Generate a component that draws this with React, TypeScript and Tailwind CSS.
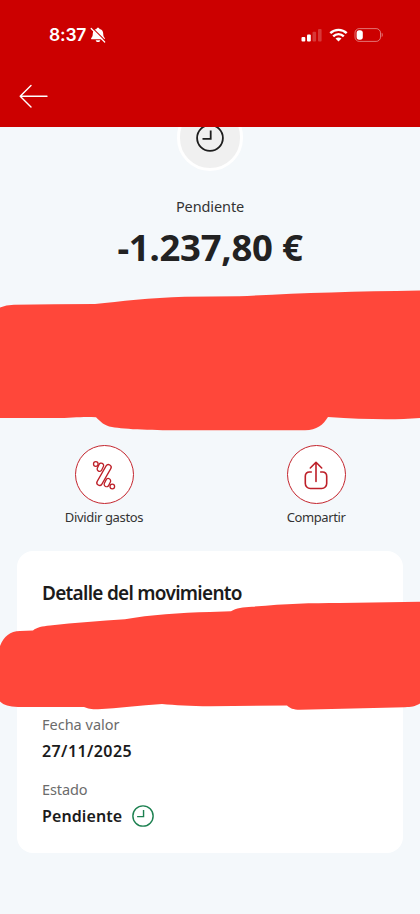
import { ReactNode } from "react";

interface ActionProps {
  label: string;
  labelClass: string;
  children: ReactNode;
}

interface FieldProps {
  label: string;
  labelClass: string;
  children: ReactNode;
}

function StatusBar() {
  return (
    <div className="flex h-[69px] items-center justify-between pl-[49px] pr-[36px]">
      <div className="flex items-center gap-1 text-white">
        <span className="font-['Inter',sans-serif] text-[17.5px] font-semibold leading-5 tracking-[-0.2px]">8:37</span>
        <svg width="16" height="16" viewBox="0 0 16 16">
          <path d="M8 .8c-.9 0-1.400.5-1.500 1.200C4.100 2.500 2.800 4.300 2.800 6.500c0 2.700-.8 3.600-1.500 4.500-.5.700-.1 1.300.6 1.300h12.200c.7 0 1.100-.6.600-1.300-.7-.9-1.500-1.800-1.500-4.500 0-2.200-1.300-4-3.700-4.500C9.400 1.300 8.900.8 8 .8z" fill="currentColor" />
          <path d="M5.700 13.200h4.600c-.2 1.200-1.200 1.900-2.300 1.900s-2.100-.7-2.300-1.900z" fill="currentColor" />
          <path d="M2.300 .8 15.200 13.700" stroke="#cc0000" strokeWidth="1.200" />
          <path d="M1.200 1.500 14.700 15" stroke="currentColor" strokeWidth="1.200" strokeLinecap="round" />
        </svg>
      </div>
      <div className="flex items-center text-white">
        <svg width="21" height="14" viewBox="0 0 21 14" fill="currentColor">
          <rect x="0.500" y="9" width="3.800" height="4.500" rx="1" />
          <rect x="6" y="6.500" width="3.800" height="7" rx="1" />
          <rect x="11.500" y="3.800" width="3.600" height="9.700" rx="1" opacity="0.220" />
          <rect x="17" y="1" width="3.600" height="12.500" rx="1" opacity="0.220" />
        </svg>
        <svg className="ml-[7px]" width="19" height="14" viewBox="0 0 19 14" fill="none" stroke="currentColor" strokeWidth="2.400">
          <path d="M1.300 5.200C5.900.700 13.100.700 17.700 5.200" />
          <path d="M4.200 8.300c3-2.900 7.600-2.900 10.600 0" />
          <path d="M9.500 13.600 6.500 10.600c1.700-1.500 4.300-1.500 6 0z" fill="currentColor" stroke="none" />
        </svg>
        <svg className="ml-[6px]" width="30" height="14" viewBox="0 0 30 14">
          <rect x="1" y="0.600" width="25.500" height="12.800" rx="4.300" fill="none" stroke="white" strokeOpacity="0.450" />
          <rect x="2.600" y="2.300" width="6.200" height="9.400" rx="2.600" fill="white" />
          <path d="M27.700 4.800c1.300.5 1.300 3.900 0 4.400z" fill="white" fillOpacity="0.500" />
        </svg>
      </div>
    </div>
  );
}

function ClockIcon({ className }: { className: string }) {
  return (
    <svg className={className} viewBox="0 0 28 28" fill="none" stroke="currentColor" strokeWidth="1.800">
      <circle cx="14" cy="14" r="12.900" />
      <path d="M14.700 6.500v8.300H6.500" />
    </svg>
  );
}

function Action({ label, labelClass, children }: ActionProps) {
  return (
    <div className="flex w-[120px] flex-col items-center">
      <div className="flex h-[59px] w-[59px] items-center justify-center rounded-full border-[1.5px] border-[#c4262e] bg-white text-[#bd1f28]">
        {children}
      </div>
      <span className={"mt-[3px] whitespace-nowrap text-[13px] leading-5 text-[#333] " + labelClass}>{label}</span>
    </div>
  );
}

function Field({ label, labelClass, children }: FieldProps) {
  return (
    <div className="flex flex-col">
      <div className={"text-[14.5px] leading-5 text-[#6b6b6b] " + labelClass}>{label}</div>
      <div className="mt-[7px] flex h-5 items-center text-[16px] font-semibold leading-5 text-[#1b1b1b]">{children}</div>
    </div>
  );
}

export default function App() {
  return (
    <div className="relative flex h-[914px] w-[420px] flex-col overflow-hidden bg-[#f4f8fb] font-['Noto_Sans',sans-serif]">
      <header className="h-[127px] shrink-0 bg-[#cc0000]">
        <StatusBar />
        <div className="flex pl-[19px] pt-[15px]">
          <svg width="30" height="24" viewBox="0 0 30 24" fill="none" stroke="white" strokeWidth="1.400" strokeLinecap="round" strokeLinejoin="round">
            <path d="M28 12.300H1.200M12 1.500 1.200 12.300 12 23" />
          </svg>
        </div>
      </header>

      <main className="flex flex-1 flex-col overflow-hidden">
        <section className="flex flex-col items-center">
          <div className="-mt-[23px] flex h-[67px] w-[66px] shrink-0 items-center justify-center rounded-full border-[3px] border-white bg-[#f0f0f0] text-[#1d1d1d]">
            <ClockIcon className="h-7 w-7" />
          </div>
          <div className="mt-[25px] text-[14.5px] leading-5 tracking-[-0.1px] text-[#333]">Pendiente</div>
          <div className="mt-[6px] whitespace-nowrap text-[36.5px] font-bold leading-[50px] tracking-[-0.25px] text-[#222]">-1.237,80 €</div>
        </section>

        <section className="mt-[173px] flex justify-between px-[44px]">
          <Action label="Dividir gastos" labelClass="tracking-[-0.35px]">
            <svg width="30" height="30" viewBox="-15 -15 30 30" fill="none" stroke="currentColor" strokeWidth="1.300">
              <circle cx="-8.200" cy="-11" r="2.300" />
              <rect x="-2.400" y="-4.300" width="4.800" height="8.600" rx="2.400" transform="translate(-3.600 -7.800) rotate(26)" />
              <rect x="-2.700" y="-11.600" width="5.400" height="23.200" rx="2.700" transform="rotate(30)" />
              <rect x="-2.400" y="-4.300" width="4.800" height="8.600" rx="2.400" transform="translate(3.400 7.600) rotate(26)" />
              <circle cx="8.300" cy="11.500" r="2.300" />
            </svg>
          </Action>
          <Action label="Compartir" labelClass="tracking-[-0.4px]">
            <svg width="28" height="30" viewBox="0 0 28 30" fill="none" stroke="currentColor" strokeWidth="1.600" strokeLinecap="round" strokeLinejoin="round">
              <path d="M14 21.500V2.500M8.300 8 14 2.300 19.700 8" />
              <path d="M9.300 12H7.500a4 4 0 0 0-4.200 4.200v7.300a5 5 0 0 0 5 5h11.400a5 5 0 0 0 5-5v-7.300A4 4 0 0 0 20.500 12h-1.800" />
            </svg>
          </Action>
        </section>

        <section className="ml-[17px] mr-[17px] mt-[24px] h-[302px] shrink-0 rounded-2xl bg-white px-[25px] pt-[29px]">
          <h2 className="whitespace-nowrap text-[19px] font-semibold leading-[26px] tracking-[-0.72px] text-[#1b1b1b]">Detalle del movimiento</h2>
          <div className="mt-[108px] flex flex-col gap-[18px]">
            <Field label="Fecha valor" labelClass="">
              <span className="tracking-[0.4px]">27/11/2025</span>
            </Field>
            <Field label="Estado" labelClass="tracking-[-0.1px]">
              <span className="tracking-[0.1px]">Pendiente</span>
              <ClockIcon className="ml-[10px] h-[22px] w-[22px] text-[#1c8050]" />
            </Field>
          </div>
        </section>
      </main>

      {/* marker strokes hiding the private data */}
      <svg className="pointer-events-none absolute left-0 top-0" width="420" height="914" viewBox="0 0 420 914" fill="#ff473a">
        <path d="M0 307.500Q6 305 14 304.700Q55 304 95 304C120 301.500 150 297.500 185 296.700L239 296.300C290 293.500 350 291.500 420 290.500V418C395 420 365 419.500 328 417C323 425 317 430 305 430.300H185C155 430.300 125 429.500 112 427C104 425.500 101 422 96 417.200C82 416.300 72 418 55 418H0Z" />
        <path d="M0 646C4 636 10 631.300 20 630.900L33 630.400C37 627.500 42 626.400 50 625.600C75 622.500 100 621 125 619.300C150 614.800 180 612.700 210 612L231 611.300C236 608 243 607.500 252 606.800C285 603.500 310 602.900 340 602.900L420 601.700V703.500C415 706.500 411 707 405 707.200L300 709.700C293 709.500 290 708.300 287 705.400L210 706.300C190 706.300 175 705 162 704C140 705.200 118 708.200 98 709.300C91 709.300 88 708.500 84 706.900L18 707C9 706.500 4 705.500 0 701.500Z" />
      </svg>
    </div>
  );
}
